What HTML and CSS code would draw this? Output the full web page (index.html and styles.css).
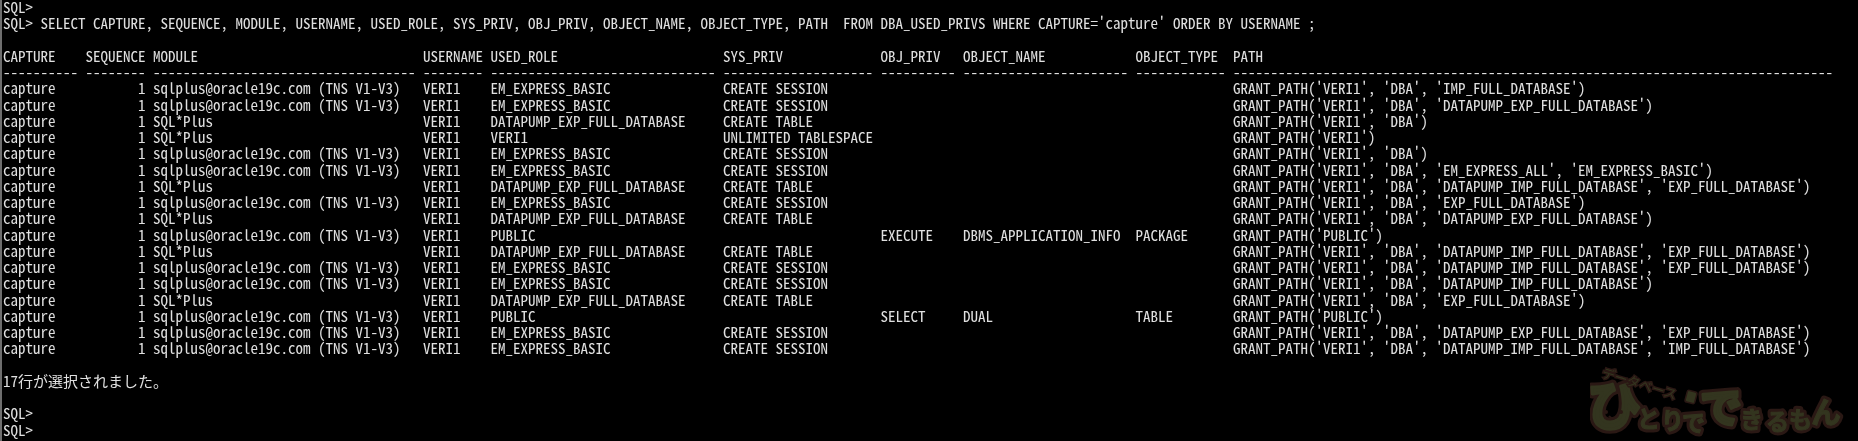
FILE: index.html
```html
<!DOCTYPE html>
<html lang="ja">
<head>
<meta charset="utf-8">
<title>SQL*Plus</title>
<link rel="stylesheet" href="styles.css">
</head>
<body>
<main class="console">
<pre class="output">SQL&gt;
SQL&gt; SELECT CAPTURE, SEQUENCE, MODULE, USERNAME, USED_ROLE, SYS_PRIV, OBJ_PRIV, OBJECT_NAME, OBJECT_TYPE, PATH  FROM DBA_USED_PRIVS WHERE CAPTURE='capture' ORDER BY USERNAME ;

CAPTURE    SEQUENCE MODULE                              USERNAME USED_ROLE                      SYS_PRIV             OBJ_PRIV   OBJECT_NAME            OBJECT_TYPE  PATH
---------- -------- ----------------------------------- -------- ------------------------------ -------------------- ---------- ---------------------- ------------ --------------------------------------------------------------------------------
capture           1 sqlplus@oracle19c.com (TNS V1-V3)   VERI1    EM_EXPRESS_BASIC               CREATE SESSION                                                      GRANT_PATH('VERI1', 'DBA', 'IMP_FULL_DATABASE')
capture           1 sqlplus@oracle19c.com (TNS V1-V3)   VERI1    EM_EXPRESS_BASIC               CREATE SESSION                                                      GRANT_PATH('VERI1', 'DBA', 'DATAPUMP_EXP_FULL_DATABASE')
capture           1 SQL*Plus                            VERI1    DATAPUMP_EXP_FULL_DATABASE     CREATE TABLE                                                        GRANT_PATH('VERI1', 'DBA')
capture           1 SQL*Plus                            VERI1    VERI1                          UNLIMITED TABLESPACE                                                GRANT_PATH('VERI1')
capture           1 sqlplus@oracle19c.com (TNS V1-V3)   VERI1    EM_EXPRESS_BASIC               CREATE SESSION                                                      GRANT_PATH('VERI1', 'DBA')
capture           1 sqlplus@oracle19c.com (TNS V1-V3)   VERI1    EM_EXPRESS_BASIC               CREATE SESSION                                                      GRANT_PATH('VERI1', 'DBA', 'EM_EXPRESS_ALL', 'EM_EXPRESS_BASIC')
capture           1 SQL*Plus                            VERI1    DATAPUMP_EXP_FULL_DATABASE     CREATE TABLE                                                        GRANT_PATH('VERI1', 'DBA', 'DATAPUMP_IMP_FULL_DATABASE', 'EXP_FULL_DATABASE')
capture           1 sqlplus@oracle19c.com (TNS V1-V3)   VERI1    EM_EXPRESS_BASIC               CREATE SESSION                                                      GRANT_PATH('VERI1', 'DBA', 'EXP_FULL_DATABASE')
capture           1 SQL*Plus                            VERI1    DATAPUMP_EXP_FULL_DATABASE     CREATE TABLE                                                        GRANT_PATH('VERI1', 'DBA', 'DATAPUMP_EXP_FULL_DATABASE')
capture           1 sqlplus@oracle19c.com (TNS V1-V3)   VERI1    PUBLIC                                              EXECUTE    DBMS_APPLICATION_INFO  PACKAGE      GRANT_PATH('PUBLIC')
capture           1 SQL*Plus                            VERI1    DATAPUMP_EXP_FULL_DATABASE     CREATE TABLE                                                        GRANT_PATH('VERI1', 'DBA', 'DATAPUMP_IMP_FULL_DATABASE', 'EXP_FULL_DATABASE')
capture           1 sqlplus@oracle19c.com (TNS V1-V3)   VERI1    EM_EXPRESS_BASIC               CREATE SESSION                                                      GRANT_PATH('VERI1', 'DBA', 'DATAPUMP_IMP_FULL_DATABASE', 'EXP_FULL_DATABASE')
capture           1 sqlplus@oracle19c.com (TNS V1-V3)   VERI1    EM_EXPRESS_BASIC               CREATE SESSION                                                      GRANT_PATH('VERI1', 'DBA', 'DATAPUMP_IMP_FULL_DATABASE')
capture           1 SQL*Plus                            VERI1    DATAPUMP_EXP_FULL_DATABASE     CREATE TABLE                                                        GRANT_PATH('VERI1', 'DBA', 'EXP_FULL_DATABASE')
capture           1 sqlplus@oracle19c.com (TNS V1-V3)   VERI1    PUBLIC                                              SELECT     DUAL                   TABLE        GRANT_PATH('PUBLIC')
capture           1 sqlplus@oracle19c.com (TNS V1-V3)   VERI1    EM_EXPRESS_BASIC               CREATE SESSION                                                      GRANT_PATH('VERI1', 'DBA', 'DATAPUMP_EXP_FULL_DATABASE', 'EXP_FULL_DATABASE')
capture           1 sqlplus@oracle19c.com (TNS V1-V3)   VERI1    EM_EXPRESS_BASIC               CREATE SESSION                                                      GRANT_PATH('VERI1', 'DBA', 'DATAPUMP_IMP_FULL_DATABASE', 'IMP_FULL_DATABASE')

17行が選択されました。

SQL&gt;
SQL&gt;
SQL&gt;</pre>
<svg class="logo" viewBox="0 0 268 76" aria-label="データベース ひとりでできるもん">
  <defs>
    <g id="logo-large-letters">
      <text class="logo-big" x="-3" y="61">ひ</text>
      <text class="logo-large" x="110" y="58">で</text>
    </g>
    <g id="logo-small-letters">
      <text class="logo-mid" x="47 71 92" y="62 64 66">とりで</text>
      <text class="logo-mid" x="150 176 199" y="63 65 63">きるも</text>
      <text class="logo-end" x="221" y="58">ん</text>
    </g>
  </defs>
  <use class="logo-outline" href="#logo-large-letters"></use>
  <use class="logo-outline-thin" href="#logo-small-letters"></use>
  <use class="logo-fill" href="#logo-large-letters"></use>
  <use class="logo-fill-thin" href="#logo-small-letters"></use>
  <text class="logo-small" transform="translate(11 12) rotate(17)">データベース</text>
  <rect class="logo-cup" x="96" y="26" width="10" height="12" rx="2" transform="rotate(15 101 32)"></rect>
  <g class="logo-face">
    <circle cx="16" cy="47" r="2"></circle>
    <circle cx="31" cy="47" r="2"></circle>
    <path d="M19 51q4 5 9 0"></path>
  </g>
</svg>
</main>
</body>
</html>
```

FILE: styles.css
```css
html, body {
  margin: 0;
  height: 100%;
  background: #000;
  overflow: hidden;
}
.console {
  position: relative;
  height: 441px;
  box-sizing: border-box;
  border-left: 2px solid #6e6e6e;
  background: #000;
  overflow: hidden;
}
.output {
  margin: -1px 0 0;
  padding-left: 1px;
  font-family: "Noto Sans CJK JP", sans-serif;
  font-feature-settings: "hwid";
  font-size: 15px;
  line-height: 16.25px;
  color: #e0e0e0;
  filter: blur(0.3px);
}
.logo {
  position: absolute;
  left: 1588px;
  top: 365px;
  width: 268px;
  height: 76px;
  font-family: "Noto Sans CJK JP", sans-serif;
  font-weight: 700;
  filter: blur(0.4px);
}
.logo-outline,
.logo-outline-thin {
  fill: #2a1814;
  stroke: #2a1814;
  stroke-linejoin: round;
}
.logo-outline { stroke-width: 9px; }
.logo-outline-thin { stroke-width: 7px; }
.logo-fill,
.logo-fill-thin {
  fill: #33351f;
  stroke: #33351f;
  stroke-linejoin: round;
}
.logo-fill { stroke-width: 3px; }
.logo-fill-thin { stroke-width: 1px; }
.logo .logo-small {
  font-size: 13px;
  font-weight: 400;
  fill: #33351f;
  stroke: #2a1814;
  stroke-width: 3px;
  paint-order: stroke;
}
.logo-big { font-size: 54px; }
.logo-large { font-size: 42px; }
.logo-mid { font-size: 23px; }
.logo-end { font-size: 30px; }
.logo-cup {
  fill: #33351f;
  stroke: #2a1814;
  stroke-width: 1.5px;
}
.logo-face circle { fill: #2a1814; }
.logo-face path {
  fill: none;
  stroke: #2a1814;
  stroke-width: 2px;
}
```
